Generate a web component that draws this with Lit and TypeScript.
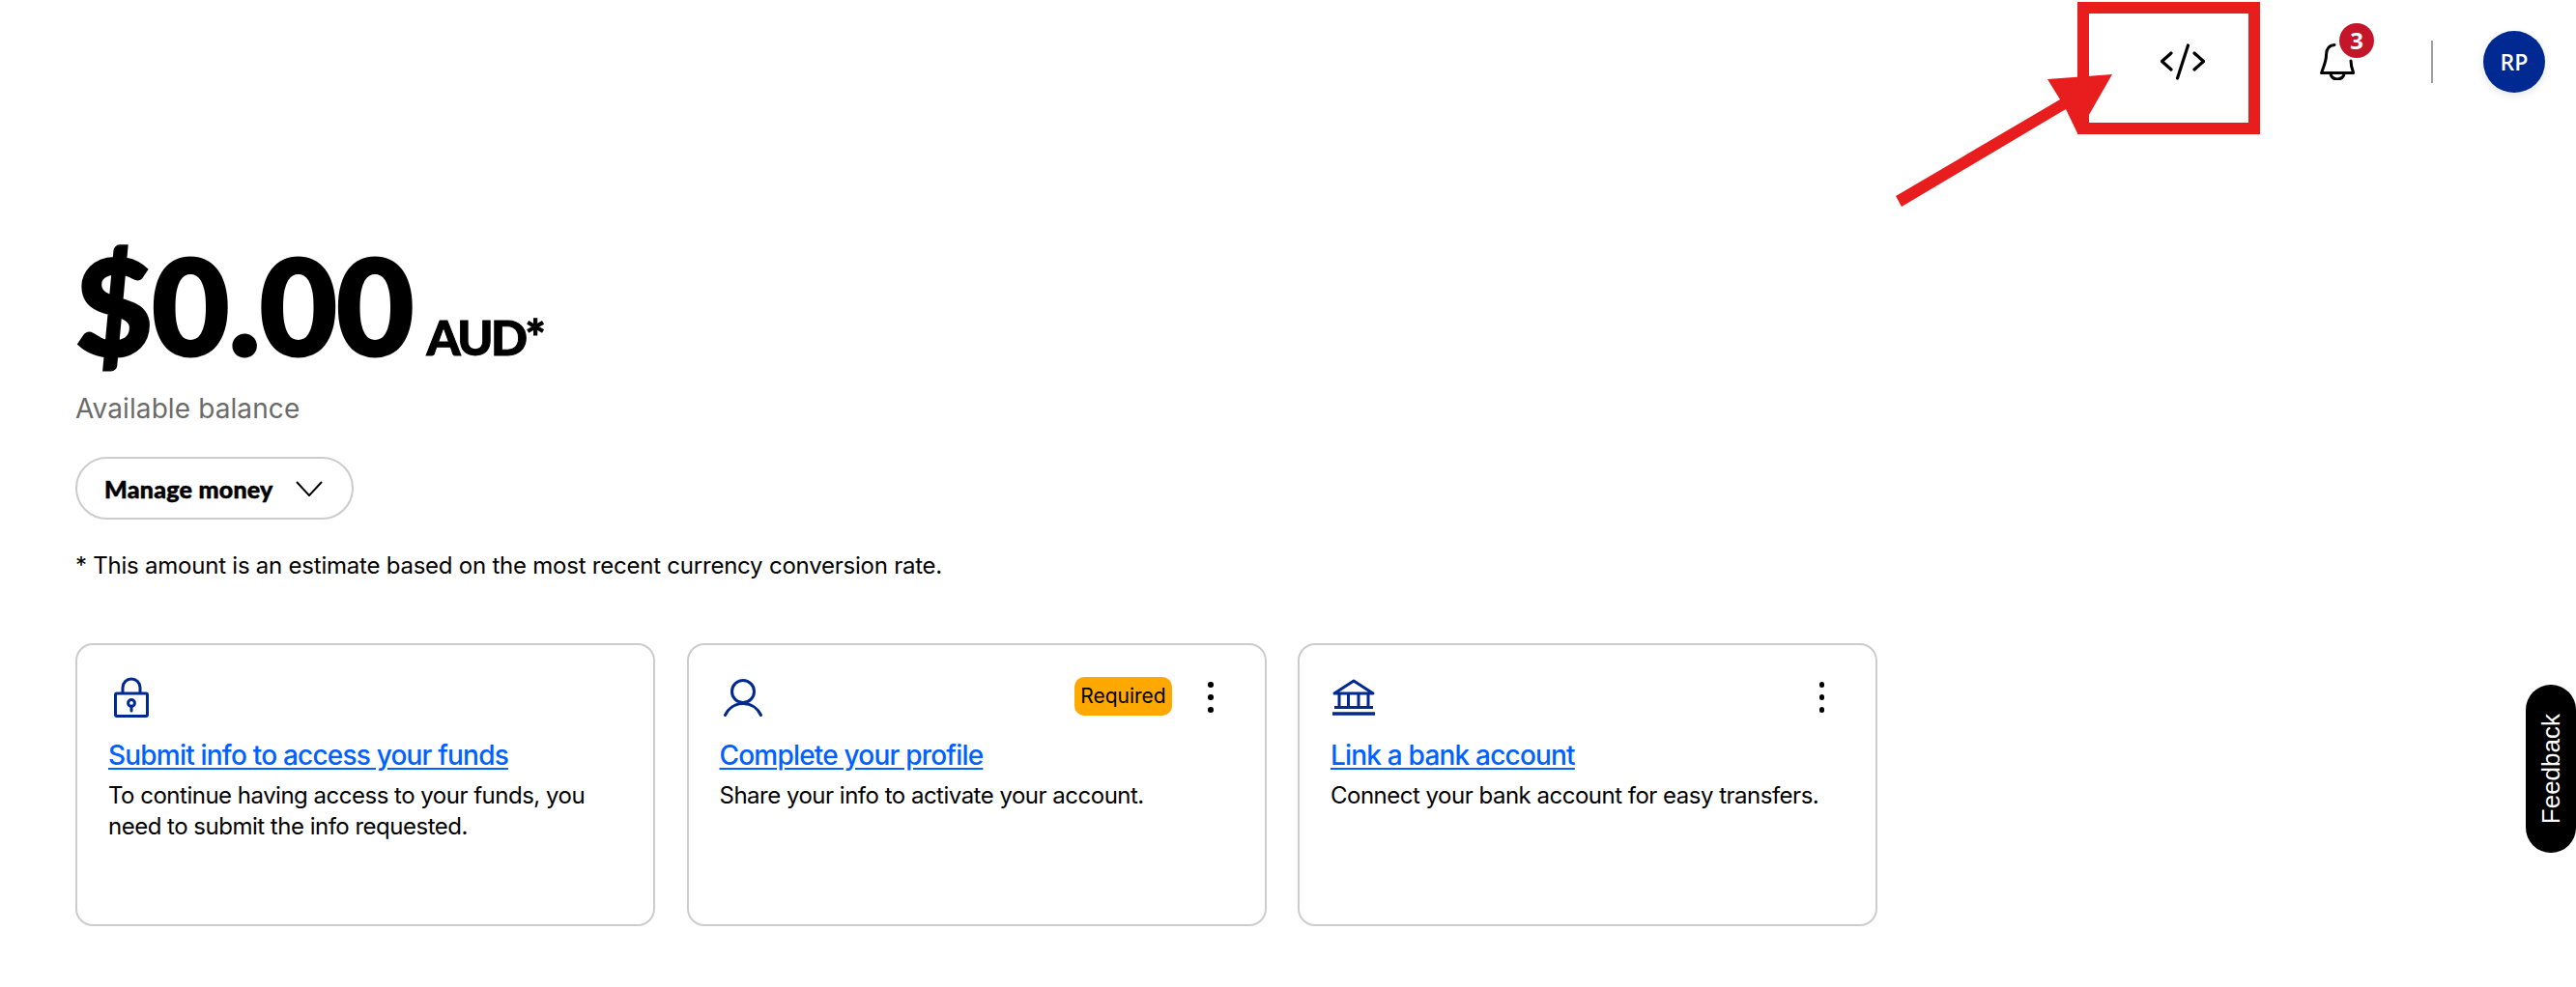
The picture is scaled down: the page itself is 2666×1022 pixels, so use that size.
import { LitElement, html, css, svg } from "lit";
import { customElement } from "lit/decorators.js";

const lock = svg`<svg class="ico" style="margin-left:6px" width="36" height="42" viewBox="0 0 36 42" fill="none" stroke="#002991" stroke-width="3" stroke-linejoin="round"><path d="M9 17V11a9 9 0 0 1 18 0v6"/><rect x="1.5" y="17" width="33" height="23.5" rx="1.5"/><circle cx="18" cy="27" r="3.4"/><path d="M18 30v5" stroke-linecap="round"/></svg>`;
const person = svg`<svg class="ico" style="margin-left:4px" width="40" height="39" viewBox="0 0 40 39" fill="none" stroke="#002991" stroke-width="3" stroke-linecap="round"><circle cx="20" cy="13" r="11.5"/><path d="M1.5 37.5C5 30 12 25.5 20 25.5S35 30 38.5 37.5"/></svg>`;
const bank = svg`<svg class="ico" style="margin-left:2px" width="45" height="38" viewBox="0 0 45 38" fill="none" stroke="#002991" stroke-width="3"><path d="M2 15 22 2 42 15Z" stroke-linejoin="round"/><path d="M7 15v14M16.500 15v14M27 15v14M37 15v14M2 29.500h40"/><path d="M0 36h44" stroke-width="3.500"/></svg>`;
const dots = html`<div class="dots"><i></i><i></i><i></i></div>`;

@customElement("app-root")
export class AppRoot extends LitElement {
  static styles = css`
    :host { display: block; position: relative; width: 2666px; height: 1022px; background: #fff; overflow: hidden; color: #000; font-family: Inter, sans-serif; }
    .head { display: flex; justify-content: flex-end; align-items: center; height: 128px; padding-right: 32px; box-sizing: border-box; }
    .code { display: block; margin-right: 119px; }
    .bell { position: relative; width: 36px; height: 38px; margin-right: 79px; }
    .bell svg { display: block; }
    .badge { position: absolute; left: 20px; top: -21px; width: 36px; height: 36px; border-radius: 50%; background: #c5152b; color: #fff; font: 700 24px/36px "Open Sans", sans-serif; text-align: center; }
    .div { width: 2px; height: 44px; background: #9e9e9e; margin-right: 52px; }
    .avatar { width: 64px; height: 64px; border-radius: 50%; background: #002991; color: #fff; font: 600 23px/64px "Open Sans", sans-serif; text-align: center; box-shadow: 0 3px 8px rgba(0,0,0,.1); }
    main { padding: 113px 0 0 78px; }
    .bal { display: flex; align-items: baseline; height: 148px; }
    .amt { font: 900 138px/148px Lato, sans-serif; letter-spacing: -.7px; -webkit-text-stroke: 3px #000; }
    .cur { font: 900 50px/148px Lato, sans-serif; margin-left: 14px; letter-spacing: -2.500px; -webkit-text-stroke: 1px #000; }
    .avail { font: 400 28px/36px Inter, sans-serif; letter-spacing: .1px; color: #6b6b6b; margin-top: 16px; }
    .btn { display: flex; align-items: center; box-sizing: border-box; width: 288px; height: 65px; border: 2px solid #ccc; border-radius: 33px; margin-top: 32px; padding-left: 28px; font: 900 25px/30px Lato, sans-serif; letter-spacing: .25px; -webkit-text-stroke: .5px #000; }
    .btn svg { margin-left: 23px; }
    .note { font: 400 24px/32px Inter, sans-serif; letter-spacing: -.23px; margin-top: 32px; }
    .cards { display: flex; gap: 32.5px; margin-top: 64px; }
    .card { box-sizing: border-box; width: 600px; height: 293px; border: 2px solid #ccc; border-radius: 18px; padding: 32px 32px 0; }
    .top { display: flex; align-items: center; height: 44px; margin-bottom: 20px; }
    .req { margin-left: auto; margin-top: -3px; background: #ffa800; border-radius: 10px; height: 40px; width: 101px; text-align: center; font: 400 21px/40px Inter, sans-serif; }
    .dots { display: flex; flex-direction: column; gap: 7.500px; margin-left: 37px; margin-right: 21px; }
    .spacer { margin-left: auto; }
    .dots i { display: block; width: 5.500px; height: 5.500px; border-radius: 50%; background: #000; }
    a { display: block; width: fit-content; color: #0061ff; font: 500 28px/36px Inter, sans-serif; text-decoration: underline; text-underline-offset: 3px; letter-spacing: -.8px; }
    p { margin: 8px 0 0; font: 400 24px/32px Inter, sans-serif; letter-spacing: -.5px; }
    .fb { position: absolute; left: 2614px; top: 709px; width: 52px; height: 174px; border-radius: 26px; background: #000; color: #fff; display: flex; align-items: center; justify-content: center; }
    .fb span { writing-mode: vertical-rl; transform: rotate(180deg); font: 400 26px/1 "Liberation Sans", sans-serif; }
    .anno { position: absolute; left: 0; top: 0; pointer-events: none; }
  `;
  render() {
    return html`
      <div class="head">
        <svg class="code" width="46" height="38" viewBox="0 0 46 38" fill="none" stroke="#000" stroke-width="3.200" stroke-linecap="round" stroke-linejoin="round"><path d="M11 10 1.500 18.500 11 27M35 10 44.500 18.500 35 27M28.500 2 17.500 36"/></svg>
        <div class="bell">
          <svg width="36" height="38" viewBox="0 0 36 38" fill="none" stroke="#000" stroke-width="3" stroke-linecap="round" stroke-linejoin="round"><path d="M15 1.500C9 2 6.500 6 6.500 12c0 7-3 12-4.500 17.500M32 18c0 5 1 8 2.500 12M1.500 30.500h33M11 31a7 6 0 0 0 14 0"/></svg>
          <div class="badge">3</div>
        </div>
        <div class="div"></div>
        <div class="avatar">RP</div>
      </div>
      <main>
        <div class="bal"><span class="amt">$0.00</span><span class="cur">AUD*</span></div>
        <div class="avail">Available balance</div>
        <div class="btn">Manage money<svg width="28" height="16" viewBox="0 0 28 16" fill="none" stroke="#000" stroke-width="2"><path d="M1 1l13 14L27 1"/></svg></div>
        <div class="note">* This amount is an estimate based on the most recent currency conversion rate.</div>
        <div class="cards">
          <div class="card"><div class="top">${lock}</div><a href="#">Submit info to access your funds</a><p>To continue having access to your funds, you<br>need to submit the info requested.</p></div>
          <div class="card"><div class="top">${person}<div class="req">Required</div>${dots}</div><a href="#">Complete your profile</a><p>Share your info to activate your account.</p></div>
          <div class="card"><div class="top">${bank}<div class="spacer"></div>${dots}</div><a href="#">Link a bank account</a><p>Connect your bank account for easy transfers.</p></div>
        </div>
      </main>
      <div class="fb"><span>Feedback</span></div>
      <svg class="anno" width="2666" height="1022" fill="#e81e1e">
        <path fill-rule="evenodd" d="M2150 2H2339V139H2150ZM2162 14V127H2327V14Z"/>
        <path d="M1962 203 1968 214 2138 113 2150.500 139 2186 77 2119 82 2132 103Z"/>
      </svg>
    `;
  }
}
